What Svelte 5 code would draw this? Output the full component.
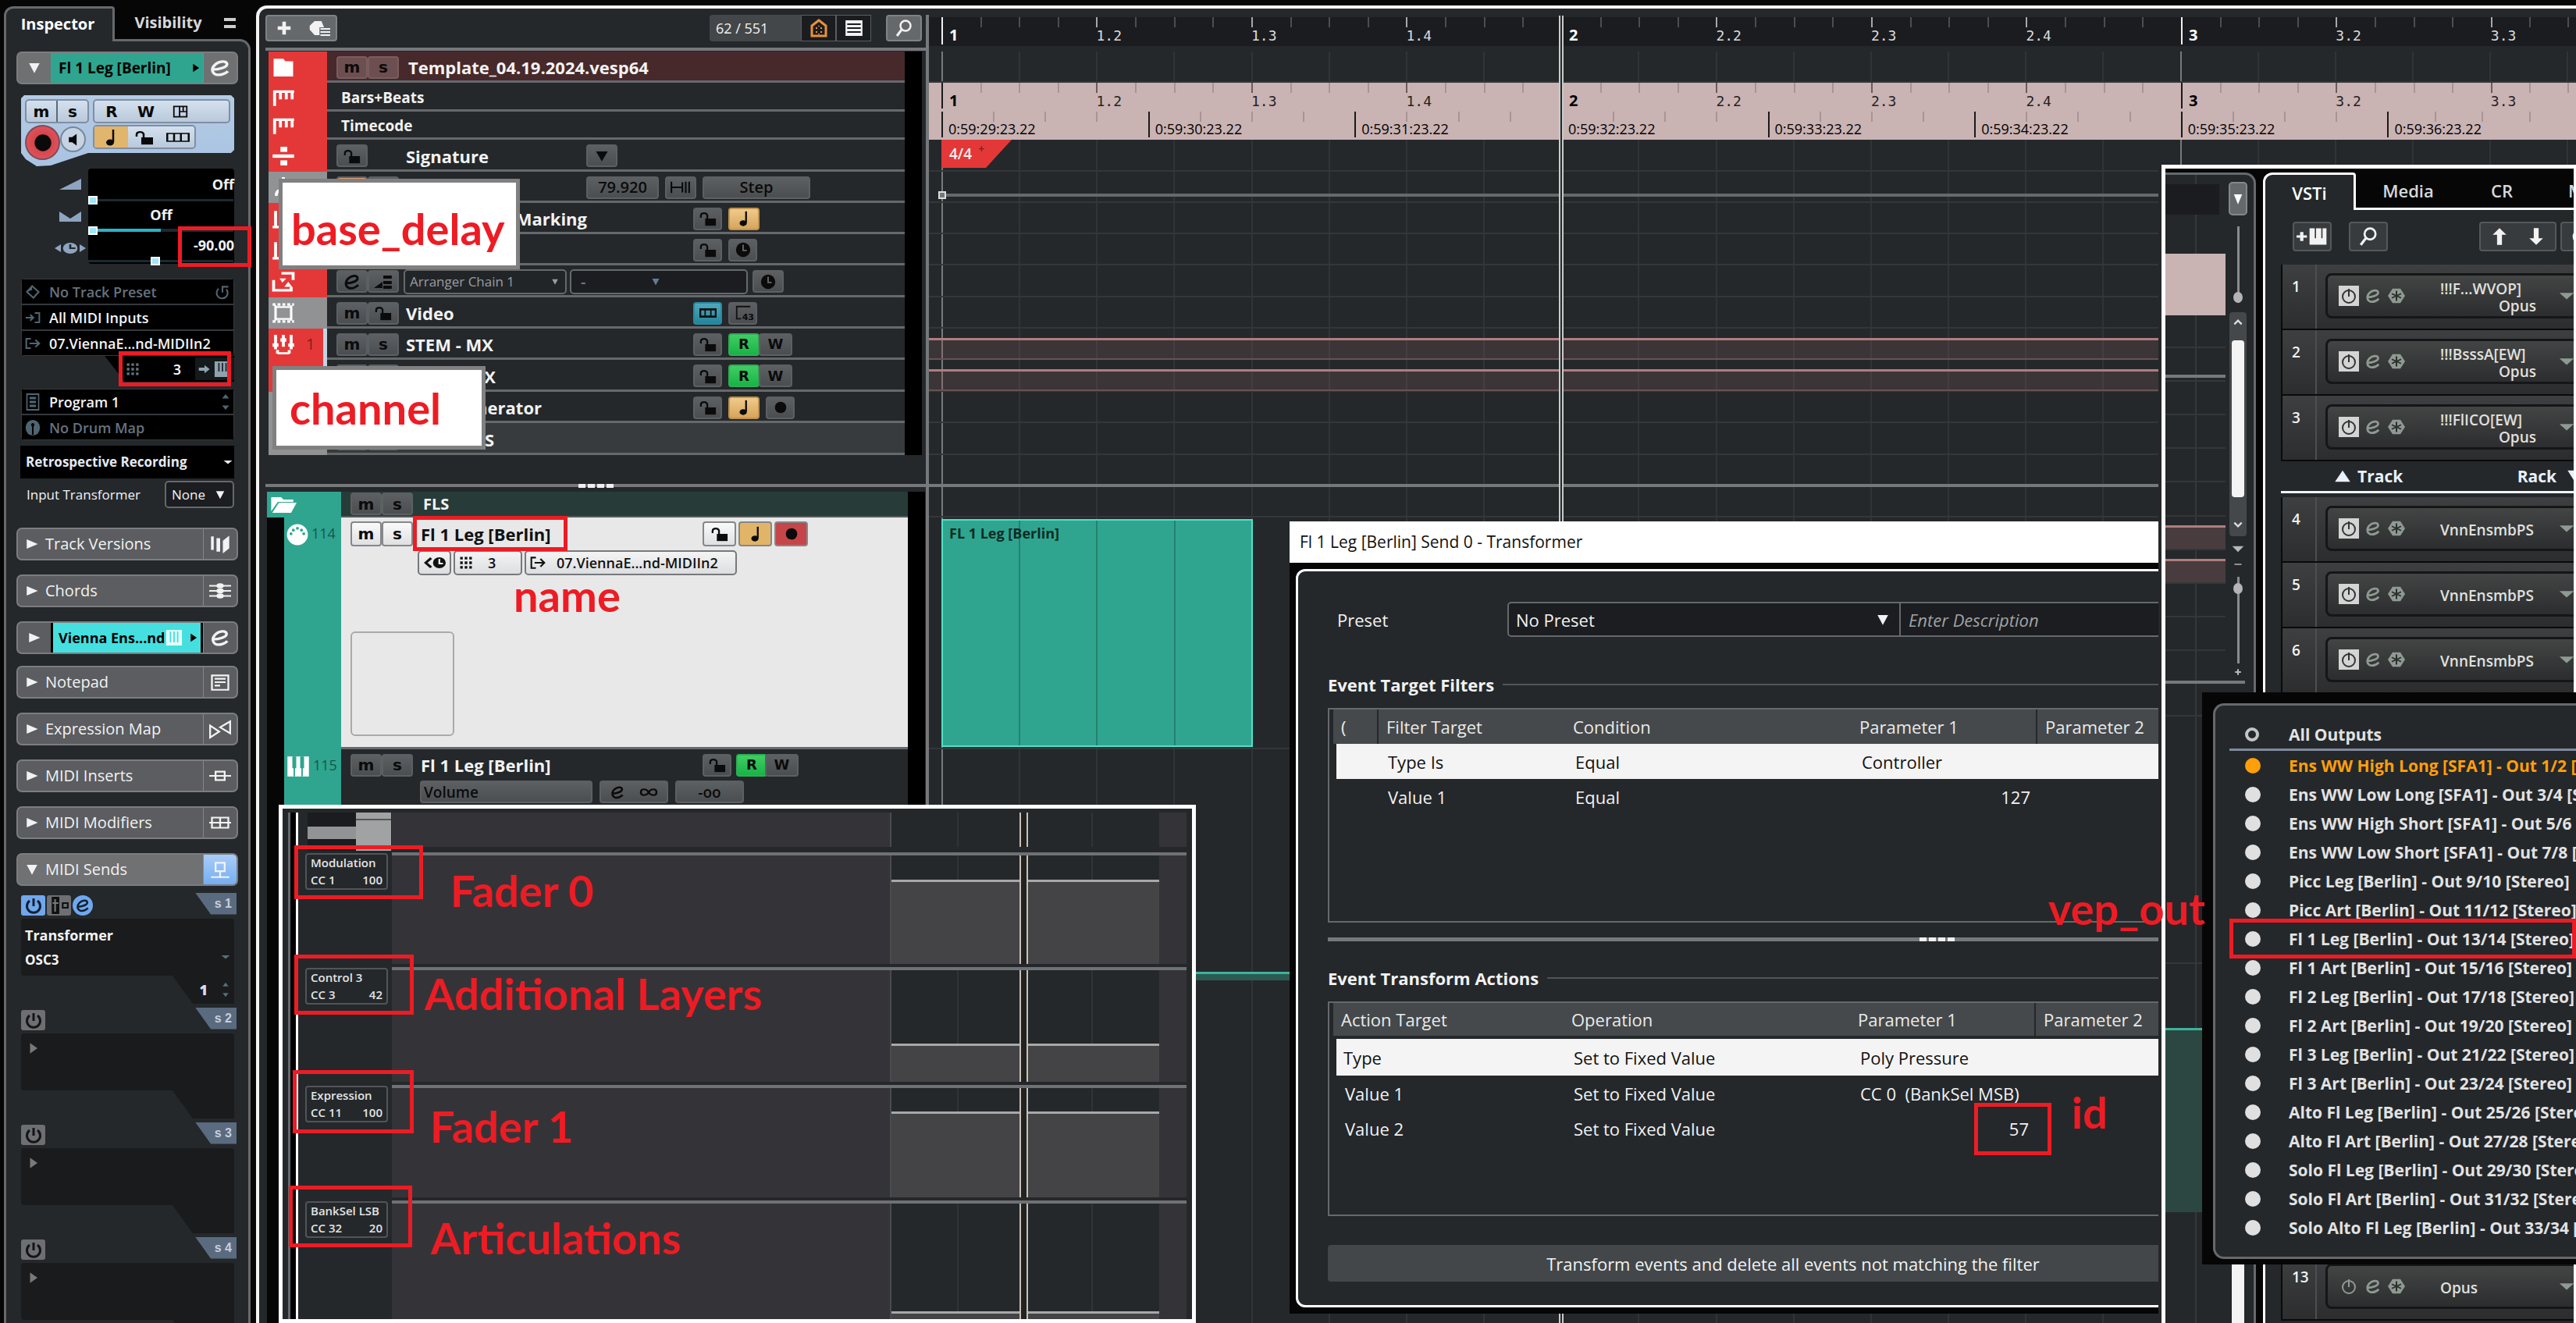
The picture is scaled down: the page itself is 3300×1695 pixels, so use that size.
<script>
  const icons = {
    e: '<path d="M4 14C11 14 20 11 19 7C18 3 11 4 7 8C3 12 3 18 8 20C12 21 17 19 20 16" fill="none" stroke="currentColor" stroke-width="3"/>',
    lock: '<path d="M2 11V8C2 4 9 3 11 7V13" fill="none" stroke="currentColor" stroke-width="2.5"/><rect x="8" y="12" width="15" height="10" fill="currentColor"/>',
    note: '<path d="M15 2V18" stroke="currentColor" stroke-width="2.5"/><ellipse cx="11" cy="18.500" rx="5" ry="4" fill="currentColor"/>',
    rec: '<circle cx="12" cy="12" r="8" fill="currentColor"/>',
    clock: '<circle cx="12" cy="12" r="10" fill="currentColor"/><path d="M12 5V13H17" fill="none" stroke="#666a6c" stroke-width="2"/>',
    back: '<path d="M8 6L2 12L8 18" fill="none" stroke="currentColor" stroke-width="3"/><circle cx="17" cy="12" r="7" fill="currentColor"/><path d="M17 7V13H21" fill="none" stroke="#eee" stroke-width="2"/>',
    lanes: '<path d="M1 6H23V18H1ZM8 6V18M15 6V18" fill="none" stroke="currentColor" stroke-width="2"/>',
    panes: '<path d="M3 4H21V20H3ZM11 4V20M11 12H21M16 4V12" fill="none" stroke="currentColor" stroke-width="2"/>',
    speaker: '<path d="M5 8H10L17 3V21L10 16H5Z" fill="currentColor"/>',
    power: '<path d="M7 6A8.500 8.500 0 1 0 17 6M12 3V13" fill="none" stroke="currentColor" stroke-width="3"/>',
    thinpower: '<circle cx="12" cy="13" r="8" fill="none" stroke="currentColor" stroke-width="2"/><path d="M12 3V13" stroke="currentColor" stroke-width="2"/>',
    star: '<path d="M7 2H17L23 12L17 22H7L1 12Z" fill="currentColor"/><path d="M12 5V19M6 9L18 15M18 9L6 15" stroke="#2c2e2f" stroke-width="2"/>',
    fader: '<rect x="3" y="1" width="9" height="22" fill="#111"/><path d="M7 4V20M4 9H11" stroke="#777" stroke-width="2"/><rect x="16" y="9" width="6" height="6" fill="none" stroke="#111" stroke-width="2"/>',
    plus: '<path d="M12 3V21M3 12H21" stroke="currentColor" stroke-width="5"/>',
    preset: '<path d="M8 3H15L18 12L15 21H8L3 14V9Z" fill="currentColor"/><path d="M13 11H24V24H13Z" fill="#66696c"/><path d="M14 13H24M14 17H24M14 21H24" stroke="currentColor" stroke-width="2"/>',
    house: '<path d="M3 22V9L12 2L21 9V22Z" fill="none" stroke="currentColor" stroke-width="3"/><path d="M8 12H10M14 12H16M8 17H10M14 17H16M12 9V10M12 19V20" stroke="currentColor" stroke-width="2"/>',
    list: '<rect x="2" y="2" width="20" height="20" fill="currentColor"/><path d="M4 7H20M4 12H20M4 17H20" stroke="#1b1c20" stroke-width="2"/>',
    search: '<circle cx="14" cy="9" r="6.500" fill="none" stroke="currentColor" stroke-width="2.500"/><path d="M9 14L3 22" stroke="currentColor" stroke-width="3"/>',
    folder: '<path d="M2 2H12L14 5H22V23H2Z" fill="currentColor"/>',
    open: '<path d="M1 2H10L12 5H21V8H7L1 20Z" fill="currentColor"/><path d="M8 9H24L19 22H2Z" fill="currentColor"/>',
    ruler: '<path d="M3 22V5H23M9 5V14M15 5V14M21 5V14" fill="none" stroke="currentColor" stroke-width="3"/>',
    divide: '<path d="M1 12H23" stroke="currentColor" stroke-width="4"/><rect x="9" y="1" width="7" height="6" fill="currentColor"/><rect x="9" y="17" width="7" height="6" fill="currentColor"/>',
    bars: '<path d="M1 22H23M4 3V22M12 9V22" stroke="currentColor" stroke-width="3"/>',
    metro: '<path d="M12 0V9M5 22C3 12 21 12 19 22" fill="none" stroke="currentColor" stroke-width="3"/>',
    arrange: '<path d="M10 2H22V10M2 10V22H20V18" fill="none" stroke="currentColor" stroke-width="3"/><path d="M8 8H15L11 13ZM13 18L17 12L21 18Z" fill="currentColor"/>',
    film: '<path d="M4 3V21M20 3V21" stroke="currentColor" stroke-width="2.500"/><path d="M1 2H23M1 22H23" stroke="currentColor" stroke-width="3" stroke-dasharray="3 2"/><path d="M4 5H20M4 19H20" stroke="currentColor" stroke-width="2"/>',
    mixer: '<path d="M4 1V18M12 1V15M20 1V18M6 23H18M6 19V23M18 19V23" stroke="currentColor" stroke-width="3"/><rect x="1" y="11" width="6" height="4" fill="currentColor"/><rect x="9" y="5" width="6" height="4" fill="currentColor"/><rect x="17" y="11" width="6" height="4" fill="currentColor"/>',
    midi: '<circle cx="12" cy="12" r="11.500" fill="currentColor"/><g fill="#2fa58f"><circle cx="5" cy="11" r="1.600"/><circle cx="7.500" cy="7" r="1.600"/><circle cx="12" cy="5" r="1.600"/><circle cx="16.500" cy="7" r="1.600"/><circle cx="19" cy="11" r="1.600"/></g>',
    keys: '<rect x="1" y="1" width="22" height="22" fill="currentColor"/><path d="M8 1V23M16 1V23" stroke="#2fa58f" stroke-width="1.500"/><path d="M8 1V14M16 1V14" stroke="#2fa58f" stroke-width="4"/>',
    piano: '<rect x="1" y="2" width="22" height="20" fill="currentColor"/><path d="M7 4V15M12 4V15M17 4V15" stroke="#223" stroke-width="2"/>',
    pianolite: '<rect x="1" y="2" width="22" height="20" fill="currentColor"/><path d="M7 4V18M12 4V18M17 4V18" stroke="#45dfdf" stroke-width="2"/>',
    addinst: '<path d="M0 12H8M4 7V17" stroke="currentColor" stroke-width="2.500"/><path d="M10 3V21H23V3H20V14H19V3H15V14H14V3Z" fill="currentColor"/>',
    up: '<path d="M12 2L19 10H14.500V22H9.500V10H5Z" fill="currentColor"/>',
    down: '<path d="M12 22L19 14H14.500V2H9.500V14H5Z" fill="currentColor"/>',
    right: '<path d="M1 9H12V4L22 12L12 20V15H1Z" fill="currentColor"/>',
    grid9: '<g fill="currentColor"><path d="M3 3h4v4H3zM10 3h4v4h-4zM17 3h4v4h-4zM3 10h4v4H3zM10 10h4v4h-4zM17 10h4v4h-4zM3 17h4v4H3zM10 17h4v4h-4zM17 17h4v4h-4z"/></g>',
    inp: '<path d="M1 12H12M8 7L13 12L8 17M15 4H22V20H15" fill="none" stroke="currentColor" stroke-width="2.500"/>',
    out: '<path d="M9 4H2V20H9M7 12H21M16 6L22 12L16 18" fill="none" stroke="currentColor" stroke-width="2.500"/>',
    diamond: '<path d="M11 3L21 12L13 21L3 12Z" fill="none" stroke="currentColor" stroke-width="2.500"/><path d="M3 12L11 3V9Z" fill="currentColor"/>',
    reload: '<path d="M6 7A8.500 8.500 0 1 0 18 8M12 13V4H21" fill="none" stroke="currentColor" stroke-width="2.500"/>',
    prog: '<path d="M3 2H21V22H3Z" fill="none" stroke="currentColor" stroke-width="2"/><path d="M7 7H17M7 12H17M7 17H17" stroke="currentColor" stroke-width="3"/>',
    drum: '<circle cx="12" cy="12" r="11" fill="currentColor"/><path d="M12 9V22" stroke="#000" stroke-width="2.500"/><circle cx="12" cy="8" r="2.500" fill="#000"/>',
    vol: '<path d="M0 19L24 5V19Z" fill="currentColor"/>',
    pan: '<path d="M0 6L12 15L24 6V19H0Z" fill="currentColor"/>',
    delay: '<path d="M0 12L6 7V17ZM30 12L24 7V17Z" fill="currentColor"/><circle cx="15" cy="12" r="7" fill="currentColor"/><path d="M15 7V12H20" fill="none" stroke="#24282b" stroke-width="2"/>',
    versions: '<path d="M2 3H5V19H2ZM8 5H12V21H8ZM15 8L22 2V17L15 23Z" fill="currentColor"/>',
    chords: '<path d="M0 6H24M0 12H24M0 18H24" stroke="currentColor" stroke-width="2"/><g fill="currentColor"><ellipse cx="12" cy="6" rx="4" ry="3"/><ellipse cx="12" cy="12" rx="4" ry="3"/><ellipse cx="12" cy="18" rx="4" ry="3"/></g>',
    notepad: '<path d="M3 4H21V21H3Z" fill="none" stroke="currentColor" stroke-width="2"/><path d="M6 8H18M6 12H18M6 16H12" stroke="currentColor" stroke-width="2"/>',
    map: '<path d="M1 8V22L11 15ZM23 3V17L12 10Z" fill="none" stroke="currentColor" stroke-width="2"/>',
    insert: '<path d="M0 12H24M7 7H17V17H7Z" fill="none" stroke="currentColor" stroke-width="2"/>',
    modif: '<path d="M0 12H24M3 6H21V18H3ZM12 6V18" fill="none" stroke="currentColor" stroke-width="2"/>',
    send: '<path d="M7 4H17V14H7ZM12 14V20M2 21H22" fill="none" stroke="currentColor" stroke-width="2"/>',
    tri: '<path d="M3 4L22 12L3 20Z" fill="currentColor"/>',
    trid: '<path d="M3 4H21L12 21Z" fill="currentColor"/>',
    triu: '<path d="M3 20H21L12 4Z" fill="currentColor"/>',
    small: '<path d="M1 8H23L12 17Z" fill="currentColor"/>',
    spin: '<path d="M3 7L12 1L21 7ZM3 17L12 23L21 17Z" fill="currentColor"/>',
    thumbs: '<path d="M1 7H23V17H1Z" fill="none" stroke="#111" stroke-width="3"/><path d="M8 8V16M16 8V16" stroke="#111" stroke-width="2"/>',
    ratio: '<path d="M22 3H3V20H9" fill="none" stroke="#111" stroke-width="2"/>',
    span: '<path d="M1 4V20M1 12H14M14 5V19M18 4V20M22 4V20" stroke="currentColor" stroke-width="2"/>',
    flagup: '<path d="M1 20L11 12V20ZM12 4H22V8H12ZM12 11H22V15H12ZM12 17H22V21H12Z" fill="currentColor"/>',
    inf: '<path d="M12 12C9 6 2 6 2 12S9 18 12 12S22 6 22 12S15 18 12 12" fill="none" stroke="currentColor" stroke-width="2.500"/>',
    caretu: '<path d="M4 16L12 8L20 16" fill="none" stroke="currentColor" stroke-width="4"/>',
    caretd: '<path d="M4 8L12 16L20 8" fill="none" stroke="currentColor" stroke-width="4"/>',
    minus: '<path d="M3 12H21" stroke="currentColor" stroke-width="3"/>'
  };

  const sections = [
    ['Track Versions', 'versions'], ['Chords', 'chords'], ['', 'e'], ['Notepad', 'notepad'],
    ['Expression Map', 'map'], ['MIDI Inserts', 'insert'], ['MIDI Modifiers', 'modif'], ['MIDI Sends', 'send']
  ];

  const tracks = [
    { k: 'tpl', h: 40, icon: 'folder', name: 'Template_04.19.2024.vesp64', ms: ['m', 's'] },
    { k: 'plain', h: 37, icon: 'ruler', name: 'Bars+Beats' },
    { k: 'plain', h: 36, icon: 'ruler', name: 'Timecode' },
    { k: 'sig', h: 41, icon: 'divide', name: 'Signature' },
    { k: 'tempo', h: 40, icon: 'metro', name: '', grey: true },
    { k: 'mark', h: 40, icon: 'bars', name: 'Marking', end: 232, r: ['lock', 'note'] },
    { k: 'mark', h: 40, icon: 'bars', name: '', r: ['lock', 'clock'] },
    { k: 'arr', h: 41, icon: 'arrange', name: '' },
    { k: 'vid', h: 40, icon: 'film', name: 'Video', grey: true, r: ['thumbs', 'ratio'] },
    { k: 'trk', h: 40, icon: 'mixer', name: 'STEM - MX', num: '1', ms: ['m', 's'], r: ['lock', 'R', 'W'] },
    { k: 'trk', h: 41, icon: 'mixer', name: 'X', end: 115, ms: ['m', 's'], r: ['lock', 'R', 'W'] },
    { k: 'gen', h: 40, icon: 'note', name: 'Generator', end: 174, grey: true, ms: ['m', 's'], r: ['lock', 'note', 'rec'] },
    { k: 'fold', h: 41, icon: 'folder', name: 'S', end: 113, grey: true, ms: ['m', 's'] }
  ];

  const beats = Array.from({ length: 11 }, (_, i) => ({
    bar: i % 4 === 0,
    label: i % 4 === 0 ? `${i / 4 + 1}` : `${Math.floor(i / 4) + 1}.${(i % 4) + 1}`
  }));
  const codes = [29, 30, 31, 32, 33, 34, 35, 36].map((s) => `0:59:${s}:23.22`);
  const halves = Array.from({ length: 22 }, (_, i) => i);

  const lanes = [
    { name: 'Modulation', cc: 'CC 1', v: 100, top: 31, h: 143 },
    { name: 'Control 3', cc: 'CC 3', v: 42, top: 94, h: 147 },
    { name: 'Expression', cc: 'CC 11', v: 100, top: 30, h: 144 },
    { name: 'BankSel LSB', cc: 'CC 32', v: 20, top: 138, h: 152 }
  ];

  const slots = [['1', '!!!F...WVOP]', 'Opus'], ['2', '!!!BsssA[EW]', 'Opus'], ['3', '!!!FlICO[EW]', 'Opus']];
  const slots2 = [['4', 'VnnEnsmbPS'], ['5', 'VnnEnsmbPS'], ['6', 'VnnEnsmbPS']];
  const stripRows = [42, 43, 43, 43, 43, 44];

  const outputs = [
    'Ens WW High Long [SFA1] - Out 1/2 [Stereo]', 'Ens WW Low Long [SFA1] - Out 3/4 [Stereo]',
    'Ens WW High Short [SFA1] - Out 5/6 [Stereo]', 'Ens WW Low Short [SFA1] - Out 7/8 [Stereo]',
    'Picc Leg [Berlin] - Out 9/10 [Stereo]', 'Picc Art [Berlin] - Out 11/12 [Stereo]',
    'Fl 1 Leg [Berlin] - Out 13/14 [Stereo]', 'Fl 1 Art [Berlin] - Out 15/16 [Stereo]',
    'Fl 2 Leg [Berlin] - Out 17/18 [Stereo]', 'Fl 2 Art [Berlin] - Out 19/20 [Stereo]',
    'Fl 3 Leg [Berlin] - Out 21/22 [Stereo]', 'Fl 3 Art [Berlin] - Out 23/24 [Stereo]',
    'Alto Fl Leg [Berlin] - Out 25/26 [Stereo]', 'Alto Fl Art [Berlin] - Out 27/28 [Stereo]',
    'Solo Fl Leg [Berlin] - Out 29/30 [Stereo]', 'Solo Fl Art [Berlin] - Out 31/32 [Stereo]',
    'Solo Alto Fl Leg [Berlin] - Out 33/34 [Stereo]'
  ];

  // Free-floating annotations: frames as [x, y, width, height], memos as [text, x, y].
  const frames = [
    [228, 290, 94, 52], [152, 450, 144, 45], [529, 661, 198, 45], [377, 1083, 165, 69],
    [377, 1223, 153, 77], [375, 1371, 155, 81], [370, 1519, 158, 79], [2529, 1413, 99, 67], [2856, 1177, 444, 51]
  ];
  const memos = [
    ['name', 658, 730], ['Fader 0', 577, 1108], ['Additional Layers', 544, 1240], ['Fader 1', 551, 1410],
    ['Articulations', 552, 1553], ['vep_out', 2624, 1131], ['id', 2654, 1392]
  ];
</script>

{#snippet ic(name, w = 24, h = w, vb = '0 0 24 24')}
  <svg width={w} height={h} viewBox={vb} preserveAspectRatio="none" aria-hidden="true">{@html icons[name]}</svg>
{/snippet}

{#snippet ctl(n)}
  {#if n === 'R'}
    <button class="mb on-green">R</button>
  {:else if n === 'W'}
    <button class="mb wbtn">W</button>
  {:else}
    <button class="mb solo b-{n}" aria-label={n}>{@render ic(n, 22)}{#if n === 'ratio'}<small>43</small>{/if}</button>
  {/if}
{/snippet}

{#snippet slot(s)}
  <div class="slot">
    <span class="num">{s[0]}</span>
    <div class="well">
      <button class="pw" class:off={s[0] === '13'} aria-label="Power">{@render ic('thinpower', 24)}</button>
      <button class="bare" aria-label="Edit">{@render ic('e', 22)}</button>
      <button class="bare" aria-label="Freeze">{@render ic('star', 24, 22)}</button>
      <div class="inst"><span>{s[1]}</span>{#if s[2]}<span class="sub">{s[2]}</span>{/if}</div>
      <button class="bare" aria-label="Open">{@render ic('small', 20, 22)}</button>
    </div>
  </div>
{/snippet}

{#snippet beatRow()}
  {#each beats as b, i}<div class="beat" class:downbeat={b.bar} class:last={i === 10}><div class="ticks"><i></i><i></i><i></i>{#if i < 10}<i></i>{/if}</div><span>{b.label}</span></div>{/each}
{/snippet}

<main class="desk">
  <aside class="inspector">
    <nav class="tabs">
      <button class="tab active">Inspector</button>
      <button class="tab">Visibility</button>
      <button class="burger" aria-label="Menu"><i></i><i></i></button>
    </nav>
    <div class="ipanel">
      <div class="sec head">
        <button class="tw" aria-label="Collapse">{@render ic('trid', 18)}</button>
        <span class="title green">Fl 1 Leg [Berlin]<span>{@render ic('tri', 10, 16)}</span></span>
        <button class="end" aria-label="Edit channel">{@render ic('e', 30, 26)}</button>
      </div>
      <div class="ctrl">
        <div class="crow">
          <div class="cbox ms"><button>m</button><button>s</button></div>
          <div class="cbox wide"><button>R</button><button>W</button><button aria-label="Panes">{@render ic('panes', 22, 20)}</button></div>
        </div>
        <div class="crow">
          <button class="recbig" aria-label="Record">{@render ic('rec', 32)}</button>
          <button class="monitor" aria-label="Monitor">{@render ic('speaker', 20)}</button>
          <div class="cbox low"><button class="amber" aria-label="Timebase">{@render ic('note', 24)}</button><button aria-label="Lock">{@render ic('lock', 24, 22)}</button><button aria-label="Lanes">{@render ic('lanes', 30, 20)}</button></div>
        </div>
      </div>
      <div class="faders">
        <div class="ficons">{@render ic('vol', 28, 24)}{@render ic('pan', 28, 24)}{@render ic('delay', 40, 24, '0 0 30 24')}</div>
        <div class="fbox">
          <label><span>Off</span><input type="range" value="0" /></label>
          <label class="mid"><span>Off</span><input class="fill" type="range" value="0" /></label>
          <label><span>-90.00</span><input type="range" value="46" /></label>
        </div>
      </div>
      <div class="lines">
        <div class="line dim">{@render ic('diamond', 20)}<span>No Track Preset</span>{@render ic('reload', 20)}</div>
        <div class="line">{@render ic('inp', 20, 18)}<span>All MIDI Inputs</span></div>
        <div class="line">{@render ic('out', 20, 18)}<span>07.ViennaE...nd-MIDIIn2</span></div>
      </div>
      <div class="chan">{@render ic('grid9', 20)}<span>3</span><div>{@render ic('right', 16)}{@render ic('piano', 22, 24)}</div></div>
      <div class="lines prog">
        <div class="line">{@render ic('prog', 20, 24)}<span>Program 1</span>{@render ic('spin', 12, 22)}</div>
        <div class="line dim">{@render ic('drum', 20, 22)}<span>No Drum Map</span></div>
      </div>
      <button class="retro">Retrospective Recording{@render ic('small', 12)}</button>
      <div class="itrans">
        <label for="itr">Input Transformer</label>
        <div class="pick"><select id="itr"><option>None</option></select>{@render ic('trid', 14)}</div>
      </div>
      {#each sections as [t, i]}
        <div class="sec" class:lit={i === 'send'} class:linked={!t}>
          <button class="tw" aria-label="Toggle {t}">{@render ic(i === 'send' ? 'trid' : 'tri', 18)}</button>
          {#if t}<span class="title">{t}</span>{:else}<span class="title cyan">Vienna Ens...nd{@render ic('pianolite', 22, 24)}<span>{@render ic('tri', 10, 16)}</span></span>{/if}
          <button class="end" aria-label={t}>{@render ic(i, 28, 26)}</button>
        </div>
      {/each}
      {#each [1, 2, 3, 4] as n}
        <div class="send">
          <div class="srow">
            <button class="sp" class:blue={n === 1} aria-label="Power">{@render ic('power', 24, 24)}</button>
            {#if n === 1}<button class="sp" aria-label="Pre">{@render ic('fader', 26, 24)}</button><button class="sp blue round" aria-label="Edit">{@render ic('e', 20)}</button>{/if}
            <span class="tag">s {n}</span>
          </div>
          <div class="sbox">
            {#if n === 1}<b>Transformer</b><b class="osc">OSC3{@render ic('small', 12)}</b>{:else}<i>{@render ic('tri', 12, 20)}</i>{/if}
          </div>
          <div class="sfoot">{#if n === 1}<b>1</b>{@render ic('spin', 10, 20)}{/if}</div>
        </div>
      {/each}
    </div>
  </aside>

  <section class="project">
    <div class="list">
      <header class="tools">
        <div class="grp"><button aria-label="Add track">{@render ic('plus', 22)}</button><button aria-label="Presets">{@render ic('preset', 30, 24)}</button></div>
        <div class="count"><span>62 / 551</span><button class="org" aria-label="Agents">{@render ic('house', 24)}</button><button aria-label="List">{@render ic('list', 26, 24)}</button></div>
        <button class="find" aria-label="Find">{@render ic('search', 24)}</button>
      </header>
      <div class="rule"></div>
      <div class="rows">
        {#each tracks as t}
          <div class="row {t.k}" style="height:{t.h}px">
            <div class="strip" class:grey={t.grey}>{@render ic(t.icon, 30, 26)}{#if t.num}<span>{t.num}</span>{/if}</div>
            <div class="body">
              {#if t.ms}<div class="pair"><button class="mb">m</button><button class="mb">s</button></div>{/if}
              {#if t.k === 'sig'}<button class="mb solo" aria-label="Lock">{@render ic('lock', 22)}</button>{/if}
              {#if t.k === 'vid'}<div class="pair"><button class="mb">m</button><button class="mb" aria-label="Lock">{@render ic('lock', 22)}</button></div>{/if}
              {#if t.k === 'tempo'}<div class="pair"><button class="mb hot" aria-label="Active"></button><button class="mb" aria-label="Lock"></button></div>{/if}
              {#if t.k === 'mark'}<div class="pair"></div>{/if}
              {#if t.k === 'arr'}
                <div class="pair"><button class="mb" aria-label="Edit">{@render ic('e', 24)}</button><button class="mb" aria-label="Flow">{@render ic('flagup', 26, 24)}</button></div>
                <div class="pick chain"><select aria-label="Arranger chain"><option>Arranger Chain 1</option></select>{@render ic('trid', 10)}</div>
                <div class="pick dash"><select aria-label="Section"><option>-</option></select>{@render ic('trid', 12)}</div>
                <button class="mb solo" aria-label="Clock">{@render ic('clock', 22)}</button>
              {:else if t.end}
                <span class="name tailname" style="width:{t.end}px">{t.name}</span>
              {:else}
                <span class="name">{t.name}</span>
              {/if}
              {#if t.k === 'sig'}<div class="early"><button class="mb solo" aria-label="Signature menu">{@render ic('trid', 20, 18)}</button></div>{/if}
              {#if t.k === 'tempo'}<div class="early"><button class="mb bpm">79.920</button><button class="mb solo" aria-label="Span">{@render ic('span', 26, 22)}</button><button class="mb step">Step</button></div>{/if}
              {#if t.r}<div class="right">{#each t.r as n}{@render ctl(n)}{/each}</div>{/if}
            </div>
            <div class="meter"></div>
          </div>
        {/each}
      </div>
      <div class="rule split"><i></i><i></i><i></i><i></i></div>
      <div class="lower">
        <div class="row fls">
          <div class="strip teal">{@render ic('open', 34, 24)}</div>
          <div class="body"><div class="pair"><button class="mb">m</button><button class="mb">s</button></div><span class="name">FLS</span></div>
          <div class="meter"></div>
        </div>
        <div class="row sel">
          <div class="strip teal in">{@render ic('midi', 28)}<span>114</span></div>
          <div class="body">
            <div class="l1">
              <div class="pair lite"><button class="mb">m</button><button class="mb">s</button></div><span class="name">Fl 1 Leg [Berlin]</span>
              <div class="right lite">{#each ['lock', 'note', 'rec'] as n}{@render ctl(n)}{/each}</div>
            </div>
            <div class="l2">
              <button aria-label="Delay">{@render ic('back', 28, 24)}</button>
              <button class="ch">{@render ic('grid9', 20)}<span>3</span></button>
              <button class="dev">{@render ic('out', 20)}<span>07.ViennaE...nd-MIDIIn2</span></button>
            </div>
            <div class="pic"></div>
          </div>
          <div class="meter"></div>
        </div>
        <div class="row inst2">
          <div class="strip teal in">{@render ic('keys', 30, 28)}<span>115</span></div>
          <div class="body">
            <div class="l1">
              <div class="pair"><button class="mb">m</button><button class="mb">s</button></div><span class="name">Fl 1 Leg [Berlin]</span>
              <div class="right">{#each ['lock', 'R', 'W'] as n}{@render ctl(n)}{/each}</div>
            </div>
            <div class="l3"><button class="mb volu">Volume</button><button class="mb" aria-label="Link">{@render ic('e', 20)}{@render ic('inf', 24, 20)}</button><button class="mb">-oo</button></div>
          </div>
          <div class="meter"></div>
        </div>
      </div>
    </div>
    <div class="vsep"></div>
    <div class="arrange">
      <div class="gridlines">{#each halves as i}<i class:barline={i % 8 === 0} class:last={i === 21}></i>{/each}</div>
      <div class="ruler dark">{@render beatRow()}</div>
      <div class="arow" style="height:{tracks[0].h}px"></div>
      <div class="pink">
        <div class="ruler">{@render beatRow()}</div>
        <div class="ruler code">
          {#each codes as c, i}<div class="beat downbeat" class:last={i === 7}><div class="ticks"><i></i><i></i><i></i><i></i></div><span>{c}</span></div>{/each}
        </div>
      </div>
      {#each tracks.slice(3) as t}
        <div class="arow" style="height:{t.h}px">
          {#if t.k === 'sig'}<div class="flag"><span>4/4</span><sup>+</sup></div>{/if}
          {#if t.k === 'tempo'}<div class="tline"><i></i></div>{/if}
          {#if t.icon === 'mixer'}<div class="stem"></div>{/if}
        </div>
      {/each}
      <div class="rule split2"></div>
      <div class="arow a1"></div>
      <div class="arow a2"><div class="clip"><span>FL 1 Leg [Berlin]</span><i></i><i></i><i></i><i></i></div></div>
      <div class="arow a3"><div class="teal-line"></div></div>
      <div class="cursor"></div>
    </div>
  </section>

  <section class="editor">
    <div class="edge"></div>
    <div class="epanel">
      <div class="erow top"><div class="ehead kb"><i></i></div><div class="lane"><div class="part"></div></div></div>
      {#each lanes as l}
        <div class="erow" style="height:{l.h}px">
          <div class="ehead"><div class="cc"><span>{l.name}</span><span>{l.cc}</span><span class="v">{l.v}</span></div></div>
          <div class="lane"><div class="part"><div class="val" style="top:{l.top}px"></div></div></div>
        </div>
      {/each}
    </div>
  </section>

  <section class="win">
    <h1>Fl 1 Leg [Berlin] Send 0 - Transformer</h1>
    <div class="wbody">
      <div class="preset">
        <label for="pre">Preset</label>
        <div class="pick big"><select id="pre"><option>No Preset</option></select>{@render ic('trid', 18)}</div>
        <input aria-label="Description" placeholder="Enter Description" />
      </div>
      <h2>Event Target Filters</h2>
      <div class="tbl">
        <table class="t1">
          <thead><tr><th>(</th><th>Filter Target</th><th>Condition</th><th>Parameter 1</th><th>Parameter 2</th></tr></thead>
          <tbody>
            <tr class="on"><td></td><td>Type Is</td><td>Equal</td><td>Controller</td><td></td></tr>
            <tr><td></td><td>Value 1</td><td>Equal</td><td class="n">127</td><td></td></tr>
          </tbody>
        </table>
      </div>
      <div class="rule split3"><i></i><i></i><i></i><i></i></div>
      <h2>Event Transform Actions</h2>
      <div class="tbl">
        <table class="t2">
          <thead><tr><th>Action Target</th><th>Operation</th><th>Parameter 1</th><th>Parameter 2</th></tr></thead>
          <tbody>
            <tr class="on"><td>Type</td><td>Set to Fixed Value</td><td>Poly Pressure</td><td></td></tr>
            <tr><td>Value 1</td><td>Set to Fixed Value</td><td>CC 0&nbsp; (BankSel MSB)</td><td></td></tr>
            <tr><td>Value 2</td><td>Set to Fixed Value</td><td class="n">57</td><td></td></tr>
          </tbody>
        </table>
      </div>
      <button class="mode">Transform events and delete all events not matching the filter</button>
    </div>
  </section>

  <section class="rackwin">
    <div class="rackin">
      <div class="pstrip">
        <div class="mini">
          <div class="mr"></div><div class="mp"></div>
          {#each stripRows as h, i}<div class="ml" class:tempo={i === 1} style="height:{h}px"></div>{/each}
          <div class="ml stemmini"></div><div class="ml stemmini"></div><div class="ml"></div><div class="ml"></div>
          <div class="mgap"></div><div class="ml m2"></div><div class="ml m3"></div><div class="mgreen"></div>
        </div>
        <div class="vbar">
          <button class="dd" aria-label="Ruler menu">{@render ic('trid', 14, 18)}</button>
          <div class="thin"></div>
          <div class="scroll">{@render ic('caretu', 14)}<i></i>{@render ic('caretd', 14)}</div>
          {@render ic('small', 16, 20)}
          {@render ic('minus', 12, 12)}
          <div class="thin up"></div>
          {@render ic('plus', 10, 10)}
          <div class="thumb2"></div>
        </div>
      </div>
      <div class="vst">
        <nav class="vtabs"><button class="active">VSTi</button><button>Media</button><button>CR</button><button>Meter</button></nav>
        <div class="vpanel">
          <div class="vtools">
            <button aria-label="Add instrument">{@render ic('addinst', 40, 28)}</button>
            <button aria-label="Find">{@render ic('search', 26)}</button>
            <div><button aria-label="Up">{@render ic('up', 30, 26)}</button><button aria-label="Down">{@render ic('down', 30, 26)}</button></div>
            <button aria-label="Settings">{@render ic('rec', 28)}</button>
          </div>
          <div class="rack">
            {#each slots as s}{@render slot(s)}{/each}
            <div class="swap"><button>{@render ic('triu', 26, 22)}Track</button><button>Rack{@render ic('trid', 26, 22)}</button></div>
            {#each slots2 as s}{@render slot(s)}{/each}
            <div class="tail">{@render slot(['13', 'Opus'])}</div>
          </div>
        </div>
      </div>
    </div>
  </section>

  <section class="popup">
    <div class="plist">
      <label class="all"><input type="radio" name="all" /><span>All Outputs</span></label>
      {#each outputs as o, i}
        <label class:cur={i === 0}><input type="radio" name="out" value={o} /><span>{o}</span></label>
      {/each}
    </div>
  </section>

  <div class="card c1">base_delay</div>
  <div class="card c2">channel</div>
  {#each frames as [x, y, w, h]}<div class="frame" style="left:{x}px;top:{y}px;width:{w}px;height:{h}px"></div>{/each}
  {#each memos as [t, x, y]}<div class="memo" style="left:{x}px;top:{y}px">{t}</div>{/each}
</main>

<style>
  :global(body) { background: #060606; }
  * { box-sizing: border-box; }
  .desk { position: relative; display: flex; height: 100vh; overflow: hidden; background: #060606; color: #f2f2f2; font: 600 20px/24px 'Open Sans', 'Noto Sans', sans-serif; white-space: nowrap; }
  button, select, input { font: inherit; color: inherit; background: none; border: 0; padding: 0; margin: 0; appearance: none; outline: 0; }
  button { display: flex; align-items: center; justify-content: center; }
  svg { flex: none; display: block; }
  i { display: block; font-style: normal; }

  /* inspector */
  .inspector { width: 316px; margin: 8px 7px 0 5px; flex: none; display: flex; flex-direction: column; font-size: 18px; }
  .tabs { display: flex; height: 45px; margin-bottom: -3px; font-size: 20px; font-weight: 700; color: #d6d8da; }
  .tab { width: 133px; height: 42px; padding-left: 4px; }
  .tab.active { width: 142px; height: 45px; border: 3px solid #66696c; border-bottom: 0; border-radius: 12px 4px 0 0; background: #24282b; color: #fff; position: relative; padding: 0 4px 3px 0; }
  .burger { flex-direction: column; gap: 5px; width: 28px; height: 42px; }
  .burger i { width: 15px; height: 4px; background: #ccc; }
  .ipanel { flex: 1; border: 3px solid #66696c; border-bottom: 0; border-radius: 0 14px 0 0; background: #24282b; padding: 13px 13px 0; overflow: hidden; }
  .sec { display: flex; height: 42px; margin-bottom: 18px; border: 2px solid #7b7d80; border-radius: 7px; background: #5b5d60; font-weight: 400; font-size: 20px; overflow: hidden; }
  .sec.head { background: #6f7072; margin-bottom: 14px; }
  .sec.linked { margin-bottom: 15px; }
  .sec.lit { background: #707173; margin-bottom: 8px; }
  .tw { width: 35px; }
  .head .tw, .linked .tw { width: 42px; }
  .title { flex: 1; display: flex; align-items: center; }
  .title.green, .title.cyan { background: #2fa58f; color: #000; font-weight: 700; font-size: 19px; padding-left: 10px; }
  .title.cyan { background: #45dfdf; border: solid #000; border-width: 0 3px; padding-left: 7px; font-size: 18px; }
  .title.cyan > svg { color: #e4ffff; }
  .title span { margin-left: auto; padding-right: 4px; }
  .end { width: 43px; border-left: 1px solid #85878a; }
  .lit .end { background: linear-gradient(#a9cdf8, #75aef2); }
  .ctrl { margin: 0 5px 0 6px; height: 92px; padding: 5px; background: linear-gradient(#b4cbe4, #a9c3e2); clip-path: polygon(0 4px, 4px 0, 269px 0, 273px 4px, 273px 70px, 269px 74px, 86px 74px, 38px 90px, 20px 91px, 6px 82px, 0 74px); color: #0a0a0a; }
  .crow { display: flex; gap: 5px; margin-bottom: 2px; }
  .cbox { display: flex; height: 31px; border: 2px solid #7f8fa2; border-radius: 5px; background: linear-gradient(#d4e0ee, #b9c9db); }
  .cbox button { flex: 1; font: 700 20px/24px 'DejaVu Sans', sans-serif; }
  .ms { width: 82px; }
  .ms button + button { border-left: 2px solid #5c6979; }
  .wide { width: 176px; padding-right: 40px; }
  .low { width: 132px; margin-left: 4px; overflow: hidden; }
  .amber { background: #e2b56c; }
  .recbig { width: 45px; height: 45px; border-radius: 50%; background: radial-gradient(#c23a42, #ee5a60); border: 2px solid #7b4e5a; }
  .monitor { width: 33px; height: 33px; border: 2px solid #77889b; border-radius: 50%; background: #c5d3e3; margin: 2px 0 0 -5px; }
  .faders { display: flex; justify-content: space-between; margin: 2px 5px 19px 0; }
  .ficons { width: 92px; padding: 8px 0 0 45px; display: flex; flex-direction: column; gap: 17px; align-items: center; color: #8ea5c0; }
  .fbox { width: 187px; height: 122px; background: #000; border-radius: 4px; font-weight: 700; }
  .fbox label { display: flex; flex-direction: column; height: 39px; padding: 8px 0 0; text-align: right; font-size: 18px; }
  .fbox label.mid { text-align: center; }
  .fbox label span { height: 24px; margin-bottom: 3px; }
  .fbox input { width: 186px; height: 10px; background: linear-gradient(#1d2930, #1d2930) center / 100% 3px no-repeat; }
  .fbox input.fill { background: linear-gradient(90deg, #2db2cc 50%, #1d2930 50%) center / 100% 4px no-repeat; }
  .fbox input::-webkit-slider-thumb { appearance: none; width: 12px; height: 11px; background: #9fe6f8; border: 2px solid #fff; }
  .lines { margin: 0 5px 0 6px; border: 1px solid #34393d; border-radius: 5px; background: #34393d; display: flex; flex-direction: column; gap: 2px; color: #4f6672; }
  .line { display: flex; align-items: center; height: 31px; background: #000; padding: 0 4px; gap: 11px; }
  .line span { flex: 1; color: #f4f4f4; }
  .line.dim span { color: #66727e; }
  .chan { margin: 0 5px 9px auto; width: 166px; height: 33px; background: #000; clip-path: polygon(0 0, 100% 0, 100% 100%, 26px 100%); display: flex; align-items: center; justify-content: flex-end; color: #63747f; }
  .chan span { width: 52px; text-align: right; color: #fff; margin-right: 18px; }
  .chan div { display: flex; gap: 4px; background: #14191b; padding: 0 4px; color: #8fa3ad; height: 29px; align-items: center; }
  .retro { width: 274px; height: 42px; margin: 7px 0 3px 5px; background: #000; font-size: 17px; font-weight: 700; justify-content: space-between; padding: 0 2px 0 7px; color: #e4e9f2; }
  .itrans { display: flex; justify-content: space-between; align-items: center; padding: 0 5px 0 13px; margin-bottom: 25px; font-weight: 400; font-size: 17px; }
  .pick { display: flex; align-items: center; border: 2px solid #66696c; border-radius: 5px; background: #1b1d20; }
  .pick select { flex: 1; min-width: 0; }
  .itrans .pick { width: 89px; height: 35px; padding: 0 9px 0 7px; }
  .send { height: 147px; padding: 0 5px 0 6px; }
  .srow { display: flex; height: 34px; align-items: center; gap: 2px; }
  .sp { width: 31px; height: 26px; border-radius: 3px; background: #6d6f72; color: #151515; }
  .blue { background: #6fa8ee; color: #12202f; }
  .round { border-radius: 50%; width: 26px; }
  .tag { margin: 0 -3px 5px auto; width: 53px; height: 28px; background: #5a6b80; clip-path: polygon(0 0, 100% 0, 100% 100%, 20px 100%); color: #c5cfdb; text-align: right; padding: 2px 6px; font: 700 16px/24px 'Liberation Sans', sans-serif; }
  .sbox { height: 73px; background: #191b1d; padding: 9px 5px 0; border-radius: 4px 4px 0 4px; }
  .sbox b { display: flex; height: 32px; font-size: 18px; font-weight: 700; }
  .sbox .osc { justify-content: space-between; color: #f4f4f4; font-size: 17px; }
  .osc svg { color: #55707c; margin-top: 2px; }
  .sbox > i { padding: 0 5px; color: #77797b; }
  .sfoot { height: 36px; margin-left: auto; width: 79px; background: #191b1d; clip-path: polygon(0 0, 100% 0, 100% 100%, 26px 100%); display: flex; align-items: center; justify-content: flex-end; gap: 18px; padding-right: 6px; color: #55707c; }
  .sfoot b { color: #d5def0; }

  /* project window */
  .project { flex: 1; min-width: 0; display: flex; margin-top: 7px; border: 4px solid #f4f4f4; border-width: 4px 0 0 4px; border-radius: 14px 0 0 0; background: #24282b; padding: 8px 0 0 8px; }
  .list { width: 846px; flex: none; display: flex; flex-direction: column; }
  .tools { display: flex; height: 34px; margin-bottom: 8px; }
  .grp { display: flex; width: 92px; border: 2px solid #808285; border-radius: 4px; background: #66696c; margin-right: auto; }
  .grp button { flex: 1; }
  .count { display: flex; width: 207px; border-radius: 4px; background: #444749; margin-right: 19px; font-weight: 400; line-height: 34px; font-size: 18px; }
  .count span { flex: 1; padding-left: 8px; }
  .count button { width: 45px; background: #1b1c20; border: 1px solid #5a5d60; }
  .count .org { color: #e8923a; }
  .find { width: 46px; margin-right: 5px; border: 2px solid #808285; border-radius: 4px; background: #66696c; }
  .rule { height: 4px; background: #76787b; display: flex; justify-content: center; gap: 3px; flex: none; }
  .rule i { width: 9px; height: 5px; background: #f0f0f0; }
  .rows { margin: 1px 5px 0 4px; }
  .split { margin-top: 37px; }
  .row { display: flex; }
  .strip { width: 75px; flex: none; background: #e43838; display: flex; align-items: center; gap: 14px; padding-left: 4px; color: #fff; }
  .strip.grey { background: #909294; }
  .strip span { font-weight: 400; color: #7e1f22; }
  .strip.teal span { color: #14574b; font-size: 18px; }
  .body { flex: 1; min-width: 0; display: flex; align-items: center; border-bottom: 3px solid #66696c; padding: 3px 0 0 12px; }
  .meter { width: 22px; flex: none; background: #000; }
  .name { flex: 1; padding-left: 9px; font-size: 22px; font-weight: 700; }
  .tailname { text-align: right; flex: none; margin: 0 auto 0 9px; padding: 0; }
  .tpl .body { background: #47292b; }
  .tpl .name { padding-left: 12px; }
  .plain .name { padding-left: 6px; font-size: 19px; }
  .fold .body { background: #383b3d; }
  .sig .name { padding-left: 49px; }
  .trk .strip { border-right: 5px solid #c4d4e4; }
  .pair { display: flex; width: 80px; flex: none; }
  .mb { width: 40px; height: 29px; border: 2px solid #5c6063; border-radius: 4px; background: linear-gradient(#5d6063, #4b4e51); color: #0b0b0b; font: 700 20px/22px 'DejaVu Sans', sans-serif; }
  .tpl .mb { background: #6d4f51; border-color: #7b5c5e; }
  .hot { background: #e79a6c; }
  .right { width: 271px; flex: none; display: flex; gap: 8px; }
  .early { width: 408px; flex: none; display: flex; gap: 8px; }
  .bpm, .step { width: 93px; font: 600 20px/24px 'Open Sans', sans-serif; }
  .step { width: 138px; }
  .on-green { background: linear-gradient(#3fce63, #19b346); border-color: #2fae55; margin-right: -9px; font-size: 18px; }
  .wbtn { width: 43px; font-size: 18px; }
  .right .solo { width: 37px; }
  .right .b-note { width: 40px; background: linear-gradient(#f0ca8b, #d7a55c); border-color: #c0924c; }
  .right .b-thumbs { background: linear-gradient(#4ea9bd, #23849a); border-color: #2a8aa0; }
  .b-ratio { position: relative; }
  .b-ratio small { position: absolute; right: 2px; bottom: 0; font: 700 11px/14px 'DejaVu Sans', sans-serif; }
  .chain { width: 209px; height: 32px; margin: 0 4px 0 6px; padding: 0 8px 0 6px; color: #9a9da0; font-weight: 400; font-size: 17px; background: #222528; }
  .dash { width: 228px; height: 32px; margin-right: 6px; padding: 0 110px 0 12px; color: #5d7f95; }
  .lower { margin: 6px 1px 0 2px; flex: 1; min-height: 0; display: flex; flex-direction: column; background: #060606; overflow: hidden; }
  .lower .strip { width: 95px; background: #2fa58f; }
  .lower .strip.in { width: 73px; margin-left: 22px; padding-left: 3px; gap: 4px; align-items: flex-start; padding-top: 8px; }
  .fls { height: 33px; }
  .fls .body { background: #273c39; border-bottom: 2px solid #555a5a; padding-top: 0; }
  .fls .name { padding-left: 13px; font-size: 20px; }
  .sel .name, .inst2 .name { padding-left: 10px; }
  .sel { height: 297px; }
  .sel .body { background: #e8e8e8; color: #111; }
  .sel .body, .inst2 .body { display: block; padding-top: 0; }
  .l1 { display: flex; align-items: center; height: 42px; }
  .l1 .right { width: 263px; gap: 6px; }
  .l1 .lite { gap: 3px; }
  .lite .mb { height: 32px; background: linear-gradient(#fafafa, #dfe0e2); border-color: #85878a; }
  .l1 .lite.pair { gap: 0; }
  .lite.right .mb { width: 43px; }
  .lite.right .b-note { background: #e2b468; }
  .lite.right .b-rec { background: #c64549; }
  .l2 { display: flex; gap: 3px; padding-left: 86px; }
  .l2 button { height: 32px; width: 43px; border: 2px solid #77797c; border-radius: 5px; background: linear-gradient(#f4f4f4, #dcdee0); font-size: 18px; }
  .l2 .ch { width: 88px; gap: 18px; justify-content: flex-start; padding-left: 4px; }
  .l2 .dev { width: 272px; gap: 14px; justify-content: flex-start; padding-left: 5px; }
  .pic { width: 133px; height: 134px; margin-top: 72px; border: 2px solid #aaa; border-radius: 6px; }
  .inst2 { flex: 1; }
  .inst2 .body { background: #24282b; }
  .inst2 .l1 { height: 40px; }
  .l3 { display: flex; gap: 9px; padding-left: 89px; }
  .l3 .mb { width: 88px; gap: 18px; font: 600 19px/24px 'Open Sans', sans-serif; }
  .l3 .volu { width: 221px; justify-content: flex-start; padding-left: 3px; }
  .vsep { width: 4px; flex: none; background: #76787b; }

  /* arrangement */
  .arrange { flex: 1; min-width: 0; position: relative; padding-top: 3px; overflow: hidden; }
  .gridlines { position: absolute; inset: 47px 0 0 16px; display: flex; }
  .gridlines i { flex: 10 1 0; border-left: 2px solid #303437; }
  .gridlines i.last { flex: 1 1 0; }
  .gridlines i.barline { border-left-color: #777a7c; }
  .ruler { position: relative; display: flex; height: 37px; padding-left: 16px; }
  .dark { background: #1b1c20; margin-bottom: 7px; color: #dcdcdc; }
  .beat { flex: 20 1 0; min-width: 0; font: 400 18px/22px 'DejaVu Sans Mono', monospace; }
  .beat.last { flex: 11 1 0; }
  .ticks { display: flex; height: 13px; }
  .ticks i { flex: 1; border-left: 2px solid #4b4d50; height: 13px; }
  .ticks i:first-child { border-left-color: #a5a7a9; }
  .beat.last .ticks i { flex: 5; }
  .beat.last .ticks i:last-child { flex: 1; }
  .downbeat .ticks i:first-child { height: 35px; border-left-color: #f0f0f0; }
  .beat.downbeat span { font: 700 20px/20px 'Open Sans', sans-serif; padding-left: 10px; color: #fff; }
  .pink { position: relative; background: #cab3b3; color: #222; height: 73px; }
  .pink .ticks i { border-left-color: #a99495; }
  .pink .ticks i:first-child { border-left-color: #6b5c5d; }
  .pink .downbeat .ticks i:first-child { border-left-color: #1a1a1a; height: 33px; }
  .pink .beat.downbeat span { color: #000; }
  .code .beat { flex: 1000 1 0; }
  .code .beat.last { flex: 913 1 0; }
  .code .beat.last .ticks i, .code .beat.last .ticks i:last-child { flex: 1; }
  .pink .code .beat span { font: 400 18px/18px 'Open Sans', sans-serif; padding-left: 9px; display: block; }
  .arow { position: relative; border-bottom: 2px solid #34373a; }
  .flag { margin-left: 16px; width: 90px; height: 36px; background: #e43838; clip-path: polygon(0 0, 100% 0, 57px 100%, 0 100%); padding: 6px 0 0 10px; font-size: 19px; display: flex; }
  .flag sup { line-height: 12px; font-size: 14px; color: #7e1f22; margin-left: 8px; }
  .tline { height: 32px; margin-left: 16px; border-bottom: 4px solid #66696c; position: relative; }
  .tline i { position: absolute; left: -4px; bottom: -7px; width: 10px; height: 10px; border: 2px solid #ddd; background: #777; }
  .stem { height: 28px; background: #8a5f613d; border-top: 3px solid #b07d7e; border-bottom: 2px solid #6a5152; position: relative; top: 12px; }
  .split2 { margin-top: 37px; position: relative; }
  .a1 { height: 39px; }
  .a2 { height: 297px; padding: 2px 0 0 16px; }
  .clip { width: calc(100% * 40 / 211 + 2px); height: 292px; background: #2fa58f; border: 2px solid #4fe0c6; color: #0d2b26; display: flex; position: relative; }
  .clip span { position: absolute; left: 8px; top: 4px; font-size: 18px; font-weight: 700; }
  .clip i { flex: 1; border-right: 2px solid #23826f; }
  .clip i:last-child { border: 0; }
  .a3 { padding-top: 285px; border: 0; }
  .teal-line { height: 11px; border-top: 3px solid #3bb39b; background: #2b5a52; }
  .cursor { position: absolute; top: 1px; bottom: 0; left: calc(16px + (100% - 16px) * 80 / 211 - 3px); width: 6px; border: 2px solid #c9cbc9; border-width: 0 2px; background: #24282b; }

  /* lane editor */
  .editor { position: absolute; left: 357px; top: 1031px; width: 1175px; bottom: 0; border: 5px solid #fff; background: #24282b; display: flex; overflow: hidden; }
  .edge { width: 18px; margin: 5px 0 0 7px; border-left: 3px solid #66696c; background: linear-gradient(90deg, #000 7px, #fff 7px, #fff 10px, #24282b 10px); }
  .epanel { flex: 1; padding: 5px 7px 0 4px; }
  .erow { display: flex; margin-bottom: 4px; }
  .top { height: 51px; margin-bottom: 0; }
  .ehead { width: 109px; padding-right: 3px; flex: none; }
  .kb i { width: 107px; height: 49px; margin-left: 3px; background: linear-gradient(#1b1c20 18px, #919395 18px, #919395 34px, #1b1c20 34px) 0 0 / 62px 100% no-repeat, linear-gradient(#a0a2a4 8px, #555 8px, #555 10px, #a0a2a4 10px); }
  .cc { height: 47px; margin-top: 1px; border: 2px solid #515558; border-radius: 4px; font-size: 15px; line-height: 20px; display: grid; grid-template-columns: 1fr auto; padding: 0 5px; color: #e4e4e4; }
  .cc span:first-child { grid-column: 1 / 3; }
  .lane { flex: 1; margin-left: 2px; border-top: 4px solid #6f7174; box-shadow: inset 0 4px #24282b; display: flex; }
  .top .lane { border: 0; background: #343438; height: 44px; }
  .lane::before { content: ''; width: 638px; flex: none; background: #343438; }
  .lane::after { content: ''; flex: 1; background: #343438; }
  .part { width: 345px; flex: none; position: relative; border-left: 2px solid #4a4b4d; overflow: hidden; background: linear-gradient(90deg, transparent 84px, #303437 84px, #303437 86px, transparent 86px, transparent 256px, #303437 256px, #303437 258px, transparent 258px) #24282b; }
  .part::after { content: ''; position: absolute; left: 164px; top: 0; bottom: 0; width: 7px; border: solid #c9c0b4; border-width: 0 2px; background: #222; z-index: 1; }
  .val { position: absolute; left: 0; right: 0; bottom: 0; border-top: 3px solid #a8a8a8; background: #444446; }

  /* transformer window */
  .win { position: absolute; left: 1652px; top: 668px; width: 1290px; background: #060606; padding-bottom: 8px; font-weight: 400; font-size: 22px; }
  h1 { margin: 0; height: 53px; background: #fff; color: #111; font: 400 21px/53px 'Open Sans', sans-serif; padding-left: 13px; }
  .wbody { margin: 8px 0 0 8px; height: 946px; border: 3px solid #fff; border-radius: 12px; background: #24282b; padding: 39px 46px 0 38px; }
  .preset { display: flex; align-items: center; height: 45px; padding-left: 12px; }
  .preset label { width: 218px; }
  .big { width: 504px; height: 45px; border-radius: 5px 0 0 5px; padding: 0 12px 0 9px; }
  .preset input { flex: 1; height: 45px; border: 2px solid #66696c; border-left: 0; background: #1b1d20; padding-left: 10px; font-style: italic; }
  .preset input::placeholder { color: #a0a2a4; opacity: 1; }
  h2 { margin: 49px 0 18px; font: 700 22px/24px 'Open Sans', sans-serif; display: flex; align-items: center; gap: 11px; }
  h2::after { content: ''; flex: 1; height: 2px; background: #515558; }
  .tbl { height: 275px; border: 2px solid #66696c; padding-left: 1px; }
  table { width: 100%; border-collapse: collapse; table-layout: fixed; }
  th { height: 44px; background: #45494b; font-weight: 400; text-align: left; padding: 0 0 0 10px; color: #eaeaea; }
  td { height: 45px; padding: 0 0 0 13px; }
  td.n { text-align: right; padding-right: 8px; }
  tr.on td { background: #f4f4f4; color: #111; }
  tr.on td:first-child { border-left: 8px solid #24282b; }
  .t1 th:nth-child(1) { width: 57px; border-right: 2px solid #24282b; }
  .t1 th:nth-child(2) { width: 240px; }
  .t1 th:nth-child(3) { width: 367px; }
  .t1 th:nth-child(4), .t2 th:nth-child(3) { width: 237px; border-right: 2px solid #24282b; }
  .t2 th:nth-child(1) { width: 295px; }
  .t2 th:nth-child(2) { width: 367px; }
  .t2 tr.on td { border-top: 4px solid #24282b; height: 49px; }
  .t2 tr.on td:first-child { padding-left: 9px; }
  .t2 td:first-child { padding-left: 15px; }
  .split3 { margin-top: 19px; height: 5px; justify-content: flex-start; }
  .split3 i:first-child { margin-left: 758px; }
  .split3 + h2 { margin-top: 35px; }
  .mode { width: 100%; height: 47px; margin-top: 37px; background: #434749; border-radius: 4px; }

  /* instrument rack */
  .rackwin { position: absolute; left: 2765px; right: 0; top: 211px; bottom: 0; border-left: 4px solid #24282b; background: #060606; }
  .rackin { height: 100%; border: 5px solid #fff; border-width: 5px 3px 0 5px; padding-top: 5px; display: flex; overflow: hidden; }
  .pstrip { width: 116px; flex: none; display: flex; justify-content: space-between; border: 3px solid #66696c; border-width: 3px 3px 0 0; border-radius: 0 14px 0 0; background: #24282b; }
  .mini { width: 77px; padding-top: 12px; background: linear-gradient(90deg, transparent 38px, #34373a 38px, #34373a 40px, transparent 40px); }
  .mr { height: 39px; width: 69px; background: #1b1c20; margin-bottom: 50px; }
  .mp { height: 79px; background: #cab3b3; }
  .ml { height: 43px; border-bottom: 2px solid #34373a; }
  .ml.tempo { background: linear-gradient(#77797b, #77797b) 0 34px / 100% 4px no-repeat; }
  .stemmini { background: linear-gradient(#b07d7e 3px, #483c3e 3px) 0 11px / 100% 30px no-repeat; }
  .mgap { height: 4px; background: #76787b; margin: 38px -25px 0 0; }
  .m2 { height: 42px; }
  .m3 { height: 317px; }
  .mgreen { margin-top: 82px; height: 236px; background: #2c4742; border-top: 3px solid #3bb39b; }
  .vbar { width: 24px; display: flex; flex-direction: column; align-items: center; margin-right: 8px; padding-top: 9px; color: #b5b7b9; }
  .dd { width: 24px; height: 43px; flex: none; background: #66696c; border: 2px solid #85878a; border-radius: 5px; color: #fff; }
  .thin { width: 3px; height: 98px; flex: none; background: #8a8c8e; margin: 14px 0 12px; position: relative; }
  .thin::after { content: ''; position: absolute; left: -5px; bottom: 0; width: 12px; height: 14px; border-radius: 50%; background: #b5b3b5; }
  .scroll { width: 22px; height: 287px; flex: none; background: #44484a; border-radius: 4px; display: flex; flex-direction: column; align-items: center; justify-content: space-between; padding: 6px 0 8px; color: #ddd; margin-bottom: 6px; }
  .scroll i { width: 16px; height: 201px; background: #f4f4f4; border-radius: 4px; margin-bottom: 12px; }
  .up { height: 111px; margin: 10px 0 6px; }
  .up::after { bottom: auto; top: 8px; }
  .vbar > svg + svg { margin-top: 4px; }
  .thumb2 { width: 16px; flex: 1; margin-top: 700px; background: #f4f4f4; }
  .vst { flex: 1; min-width: 0; margin-left: 9px; display: flex; flex-direction: column; }
  .vtabs { display: flex; height: 48px; margin-bottom: -3px; font-size: 22px; color: #d6d8da; overflow: hidden; }
  .vtabs button { height: 45px; flex: none; width: 134px; }
  .vtabs button:nth-child(3) { width: 106px; }
  .vtabs button:nth-child(4) { justify-content: flex-start; padding-left: 32px; }
  .vtabs .active { width: 119px; height: 48px; border: 3px solid #fff; border-bottom: 0; border-radius: 12px 4px 0 0; background: #24282b; color: #fff; position: relative; }
  .vpanel { flex: 1; min-height: 0; border: solid #fff; border-width: 3px 0 0 3px; background: #24282b; padding: 15px 0 0 20px; display: flex; flex-direction: column; margin-right: -3px; }
  .vtools { display: flex; height: 38px; margin-bottom: 17px; padding-left: 15px; overflow: hidden; }
  .vtools > * { width: 50px; height: 38px; flex: none; border: 2px solid #55585b; border-radius: 4px; background: #383b3e; }
  .vtools > * + * { margin-left: 22px; }
  .vtools > div { width: 99px; margin-left: 117px; display: flex; justify-content: space-around; }
  .vtools > div + button { margin-left: 5px; }
  .rack { flex: 1; min-height: 0; display: flex; flex-direction: column; overflow: hidden; font-size: 19px; }
  .slot { height: 84px; flex: none; display: flex; border: 2px solid #0a0a0a; border-width: 0 0 2px 2px; background: linear-gradient(#3d3f40, #2b2d2e); }
  .num { width: 44px; border-right: 2px solid #4c4e50; padding: 16px 0 0 12px; }
  .well { flex: 1; height: 58px; margin: 11px -8px 0 11px; border: 3px solid #151617; border-radius: 8px; background: linear-gradient(#434545, #2c2d2e); display: flex; align-items: center; padding-left: 14px; color: #8f9a92; gap: 7px; }
  .pw { width: 26px; height: 26px; background: #d4d4d4; color: #333; }
  .pw.off { background: none; color: #8f9a92; }
  .inst { width: 123px; margin: 0 22px 0 37px; display: flex; flex-direction: column; line-height: 22px; color: #e0e0de; padding-top: 4px; }
  .inst .sub { text-align: right; }
  .swap { height: 41px; margin-bottom: 5px; border-bottom: 3px solid #eef3f8; display: flex; justify-content: space-between; padding-left: 66px; font-size: 21px; font-weight: 700; flex: none; color: #e8f0fa; }
  .swap button { gap: 6px; }
  .swap button + button { gap: 11px; margin-right: -12px; }
  .tail { margin-top: auto; padding-bottom: 3px; }

  /* outputs popup */
  .popup { position: absolute; left: 2821px; right: 0; top: 887px; background: #060606; padding: 14px 0 7px 14px; overflow: hidden; }
  .plist { border: 3px solid #66696c; border-right: 0; border-radius: 14px 0 0 14px; background: #24282b; padding: 19px 0 19px 18px; font-size: 21px; font-weight: 700; color: #e2e2e2; }
  .plist label { display: flex; align-items: center; height: 37px; padding-left: 20px; gap: 36px; }
  .plist .all { height: 39px; border-bottom: 3px solid #7f8a9c; }
  .plist input { width: 20px; height: 20px; border-radius: 50%; background: #e0e0e0; flex: none; }
  .plist .all input { background: none; border: 4px solid #c4c4c4; width: 18px; height: 18px; margin-right: 2px; }
  .plist .cur { color: #ff9f0a; }
  .plist .cur input { background: #ff9f0a; }

  /* annotations */
  .card { position: absolute; background: #fff; border: 5px solid #808080; color: #ed1c24; font: 700 56px/60px Lato, sans-serif; display: flex; align-items: center; padding-left: 11px; }
  .c1 { left: 357px; top: 229px; width: 309px; height: 116px; padding-top: 12px; }
  .c2 { left: 349px; top: 469px; width: 273px; height: 107px; padding-left: 17px; }
  .frame { position: absolute; border: 5px solid #ed1c24; }
  .memo { position: absolute; color: #ed1c24; font: 700 56px/66px Lato, sans-serif; }
</style>
